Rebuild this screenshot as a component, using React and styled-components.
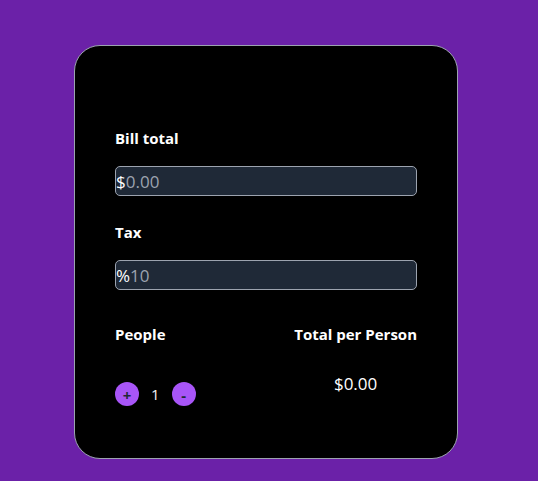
import styled, { createGlobalStyle } from "styled-components"

const Global = createGlobalStyle`
body{
  margin: 0;
  background: #6b21a8;
  font-family: "Segoe UI", "Open Sans", sans-serif;
}
`

const Page = styled.div`
display: flex;
padding: 45px 0 0 74px;
min-height: 481px;
box-sizing: border-box;
`

const Card = styled.div`
width: 384px;
height: 414px;
box-sizing: border-box;
background: #000;
border: 1px solid #9ca3af;
border-radius: 26px;
padding: 82px 40px 40px;
color: #fff;
`

const Label = styled.label`
display: block;
font-size: 15px;
font-weight: 700;
line-height: 20px;
margin-bottom: ${(p) => p.gap || 16}px;
text-align: ${(p) => p.align || "left"};
`

const Field = styled.div`
display: flex;
align-items: center;
height: 30px;
box-sizing: border-box;
background: #1f2937;
border: 1px solid #9ca3af;
border-radius: 5px;
margin-bottom: 26px;
font-size: 17px;
`

const Prefix = styled.span`
color: #fff;
`

const Input = styled.input`
flex: 1;
min-width: 0;
background: transparent;
border: none;
outline: none;
padding: 0;
color: #fff;
font: inherit;
&::placeholder{
  color: #9ca3af;
}
`

const Row = styled.div`
display: flex;
justify-content: space-between;
margin-top: 34px;
`

const Col = styled.div`
display: flex;
flex-direction: column;
align-items: ${(p) => p.align || "flex-start"};
`

const Counter = styled.div`
display: flex;
align-items: center;
gap: 12px;
margin-top: 22px;
`

const Round = styled.button`
width: 24px;
height: 24px;
border-radius: 50%;
border: none;
background: #a855f7;
color: #1f2937;
font-family: inherit;
font-size: 15px;
font-weight: 700;
line-height: 24px;
padding: 1px 0 0;
`

const Count = styled.span`
font-size: 15px;
color: #f3f4f6;
`

const Total = styled.div`
font-size: 17px;
color: #fff;
margin-top: 12px;
align-self: center;
`

const App = () => {
  return (
    <Page>
      <Global />
      <Card>
        <Label gap={18}>Bill total</Label>
        <Field>
          <Prefix>$</Prefix>
          <Input placeholder="0.00" />
        </Field>
        <Label gap={18}>Tax</Label>
        <Field>
          <Prefix>%</Prefix>
          <Input placeholder="10" />
        </Field>
        <Row>
          <Col>
            <Label>People</Label>
            <Counter>
              <Round>+</Round>
              <Count>1</Count>
              <Round>-</Round>
            </Counter>
          </Col>
          <Col align="flex-end">
            <Label>Total per Person</Label>
            <Total>$0.00</Total>
          </Col>
        </Row>
      </Card>
    </Page>
  )
}

export default App
